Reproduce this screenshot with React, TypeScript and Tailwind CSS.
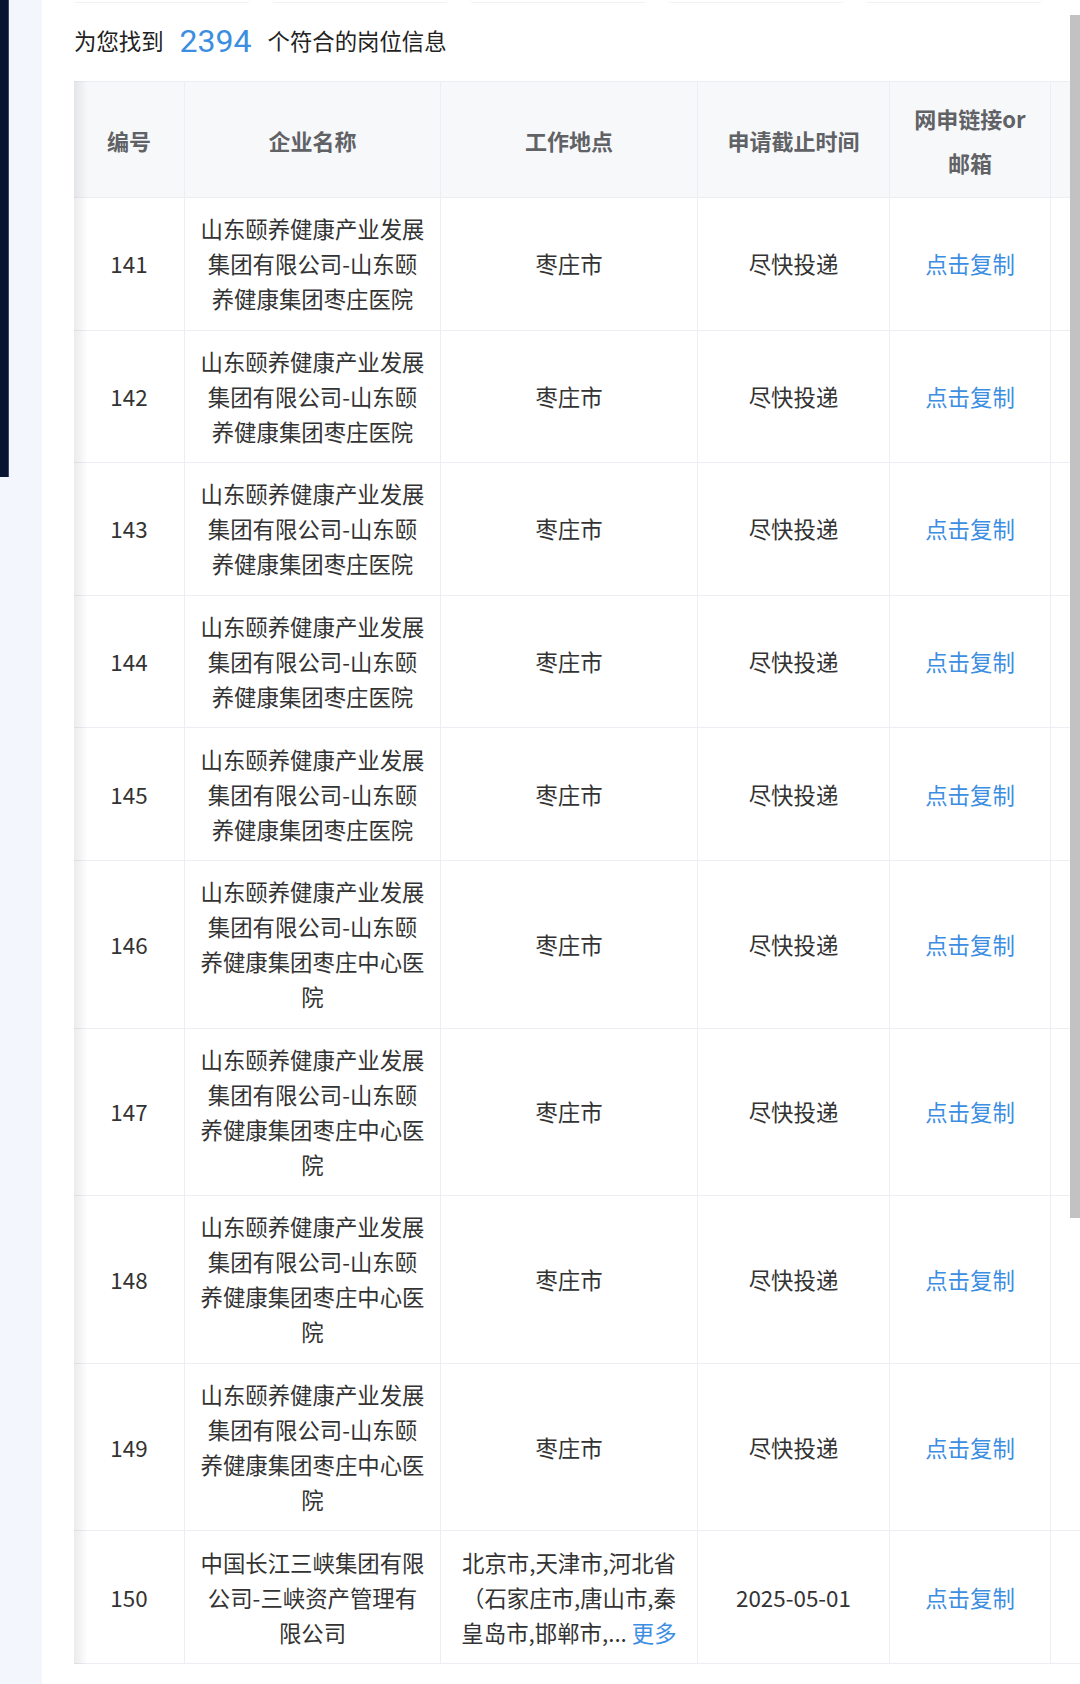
import React from 'react';

type Row = {
  id: number;
  company: string;
  place: React.ReactNode;
  deadline: string;
};

const hospital = '山东颐养健康产业发展集团有限公司-山东颐养健康集团枣庄医院';
const centerHospital = '山东颐养健康产业发展集团有限公司-山东颐养健康集团枣庄中心医院';

const rows: Row[] = [
  { id: 141, company: hospital, place: '枣庄市', deadline: '尽快投递' },
  { id: 142, company: hospital, place: '枣庄市', deadline: '尽快投递' },
  { id: 143, company: hospital, place: '枣庄市', deadline: '尽快投递' },
  { id: 144, company: hospital, place: '枣庄市', deadline: '尽快投递' },
  { id: 145, company: hospital, place: '枣庄市', deadline: '尽快投递' },
  { id: 146, company: centerHospital, place: '枣庄市', deadline: '尽快投递' },
  { id: 147, company: centerHospital, place: '枣庄市', deadline: '尽快投递' },
  { id: 148, company: centerHospital, place: '枣庄市', deadline: '尽快投递' },
  { id: 149, company: centerHospital, place: '枣庄市', deadline: '尽快投递' },
  {
    id: 150,
    company: '中国长江三峡集团有限公司-三峡资产管理有限公司',
    place: (
      <span className="whitespace-nowrap">
        北京市,天津市,河北省
        <br />
        （石家庄市,唐山市,秦
        <br />
        皇岛市,邯郸市,... <span className="text-[#3c8ee2]">更多</span>
      </span>
    ),
    deadline: '2025-05-01',
  },
];

const th =
  'border-t border-b border-r border-[#ebeef3] bg-[#f7f8fa] px-[16px] pt-[14px] pb-[13px] text-center align-middle text-[22px] leading-[44px] font-bold text-[#606266]';
const td =
  'border-b border-r border-[#ebeef3] bg-white px-[15px] py-[13.3px] text-center align-middle text-[22.4px] leading-[35px] text-[#333]';

export default function App() {
  return (
    <div
      className="w-[1080px] h-[1684px] overflow-hidden flex bg-white relative"
      style={{ fontFamily: '"Noto Sans CJK SC", "Noto Sans", sans-serif' }}
    >
      {/* left strip */}
      <div className="w-[42px] shrink-0 bg-[#f3f7fd]">
        <div className="w-[9px] h-[477px] bg-[#071530] border-r border-[#3b4b66]" />
      </div>

      <div className="flex-1 min-w-0 pl-[32px] flex flex-col overflow-hidden relative">
        {/* bottoms of filter inputs */}
        <div className="flex gap-[22px] h-[3px] shrink-0">
          {[0, 1, 2, 3, 4].map((i) => (
            <div key={i} className="w-[176px] h-[3px] border-b border-[#f0f1f4] rounded-b-[4px]" />
          ))}
        </div>

        <div className="h-[75px] shrink-0 flex items-center text-[22.4px] text-[#222]">
          <span>为您找到</span>
          <span
            className="mx-[16px] text-[32px] text-[#3b8ee0] leading-none"
            style={{ fontFamily: 'Roboto, "Noto Sans", sans-serif' }}
          >
            2394
          </span>
          <span>个符合的岗位信息</span>
        </div>

        <div className="relative mt-[3px]">
          <table className="table-fixed border-separate border-spacing-0 w-[1127px]">
            <colgroup>
              <col className="w-[111px]" />
              <col className="w-[256px]" />
              <col className="w-[257px]" />
              <col className="w-[192px]" />
              <col className="w-[161px]" />
              <col className="w-[150px]" />
            </colgroup>
            <thead>
              <tr>
                <th className={th}>编号</th>
                <th className={th}>企业名称</th>
                <th className={th}>工作地点</th>
                <th className={th}>申请截止时间</th>
                <th className={th}>网申链接or邮箱</th>
                <th className={th}></th>
              </tr>
            </thead>
            <tbody>
              {rows.map((r) => (
                <tr key={r.id}>
                  <td className={td}>{r.id}</td>
                  <td className={td}>{r.company}</td>
                  <td className={r.id === 150 ? td.replace('px-[15px]', 'px-[6px]') : td}>{r.place}</td>
                  <td className={td}>{r.deadline}</td>
                  <td className={td}>
                    <span className="text-[#3c8ee2]">点击复制</span>
                  </td>
                  <td className={td}></td>
                </tr>
              ))}
            </tbody>
          </table>
          {/* left scroll shadow */}
          <div className="absolute left-0 top-0 bottom-0 w-[14px] bg-gradient-to-r from-[rgba(0,0,0,0.08)] to-transparent pointer-events-none" />
        </div>
      </div>

      {/* scrollbar thumb */}
      <div className="absolute right-0 top-[15px] w-[10px] h-[1203px] bg-[#c2c2c2]" />
    </div>
  );
}
